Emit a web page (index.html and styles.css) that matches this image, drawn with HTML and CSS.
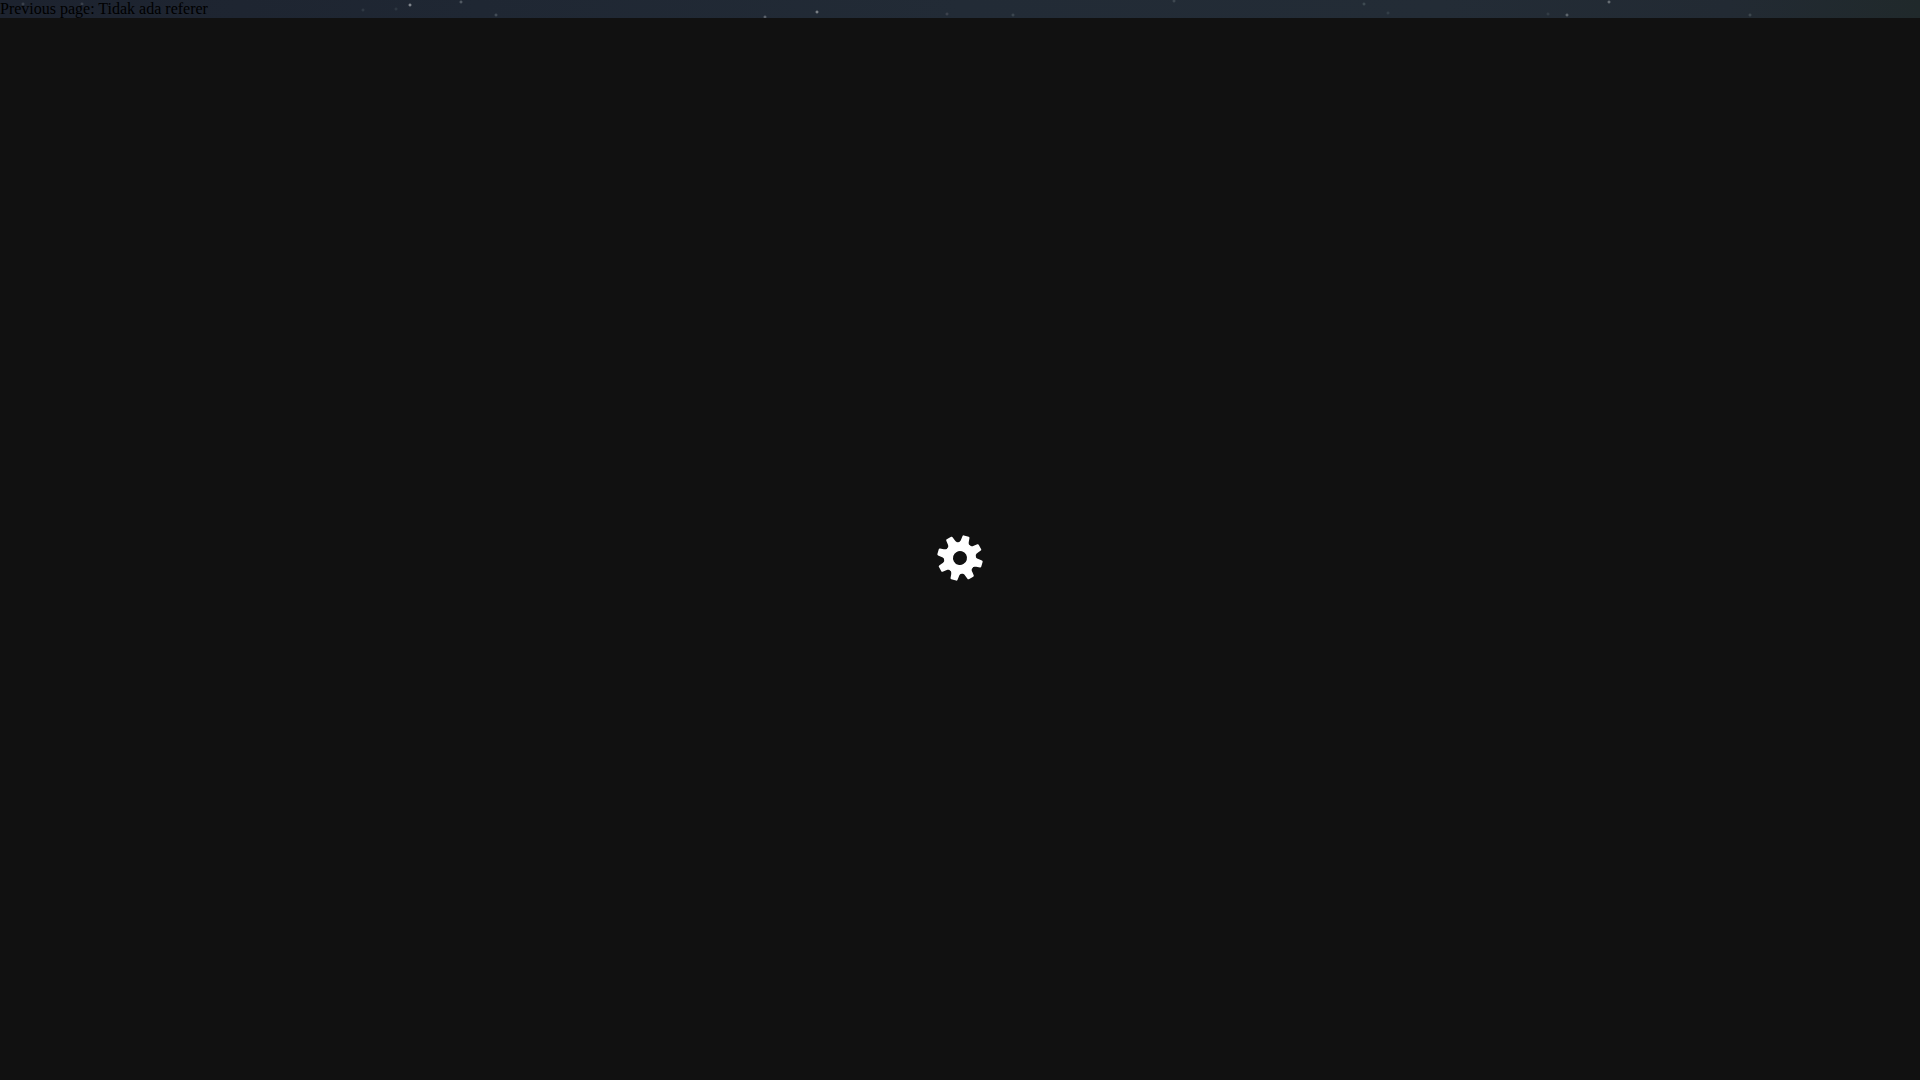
FILE: index.html
```html
<!DOCTYPE html>
<html lang="id">
<head>
    <meta charset="UTF-8">
    <meta name="viewport" content="width=device-width, initial-scale=1.0">
    <title>Loading</title>
    <link rel="stylesheet" href="styles.css">
</head>
<body>

    <div class="referer">Previous page: Tidak ada referer</div>

    <!-- Preloader -->
    <div class="preloader">
        <svg class="gear" viewBox="-24 -24 48 48" role="img" aria-label="Loading">
            <defs>
                <path id="tooth" d="M-5.6 -13 C-5 -16 -4.2 -15.8 -4 -18 L-3.6 -21.8 Q-3.5 -22.8 -2.5 -22.8 H2.5 Q3.5 -22.8 3.6 -21.8 L4 -18 C4.2 -15.8 5 -16 5.6 -13 Z"/>
            </defs>
            <g transform="rotate(16)">
                <use href="#tooth"/>
                <use href="#tooth" transform="rotate(45)"/>
                <use href="#tooth" transform="rotate(90)"/>
                <use href="#tooth" transform="rotate(135)"/>
                <use href="#tooth" transform="rotate(180)"/>
                <use href="#tooth" transform="rotate(225)"/>
                <use href="#tooth" transform="rotate(270)"/>
                <use href="#tooth" transform="rotate(315)"/>
                <circle class="gear-ring" r="11.5"/>
            </g>
        </svg>
    </div>

</body>
</html>
```

FILE: styles.css
```css
body {
    font-family: "Liberation Serif", "Times New Roman", serif;
    font-size: 16px;
    line-height: 18px;
    color: #000;
    margin: 0;
    overflow: hidden;
    /* night sky */
    background-color: #222b36;
    background-image:
        radial-gradient(circle at 23px 4px, #4a505a 0, transparent 2px),
        radial-gradient(circle at 82px 4px, #4a505a 0, transparent 2px),
        radial-gradient(circle at 363px 10px, #38424c 0, transparent 2px),
        radial-gradient(circle at 396px 9px, #36404a 0, transparent 2px),
        radial-gradient(circle at 410px 5px, #b4b8bc 0, transparent 2px),
        radial-gradient(circle at 461px 2px, #6c747c 0, transparent 2px),
        radial-gradient(circle at 496px 15px, #56606a 0, transparent 2px),
        radial-gradient(circle at 765px 17px, #7a8088 0, transparent 2px),
        radial-gradient(circle at 817px 12px, #a8acb0 0, transparent 2px),
        radial-gradient(circle at 947px 14px, #4a4e58 0, transparent 2px),
        radial-gradient(circle at 1013px 15px, #49545c 0, transparent 2px),
        radial-gradient(circle at 1174px 1px, #4c565e 0, transparent 2px),
        radial-gradient(circle at 1364px 4px, #4c5a60 0, transparent 2px),
        radial-gradient(circle at 1388px 13px, #3c4850 0, transparent 2px),
        radial-gradient(circle at 1548px 14px, #3c464e 0, transparent 2px),
        radial-gradient(circle at 1567px 15px, #7c848a 0, transparent 2px),
        radial-gradient(circle at 1609px 2px, #8a9094 0, transparent 2px),
        radial-gradient(circle at 1750px 15px, #4c565c 0, transparent 2px),
        linear-gradient(to right, #1d232f 0%, #1f2733 25%, #222b36 50%, #232c36 75%, #222a33 90%, #20292b 100%);
}

.preloader {
    display: flex;
    align-items: center;
    justify-content: center;
    height: 100vh;
    background-color: #111;
}

.gear {
    width: 48px;
    height: 48px;
    fill: #fff;
}

.gear-ring {
    fill: none;
    stroke: #fff;
    stroke-width: 9px;
}
```
